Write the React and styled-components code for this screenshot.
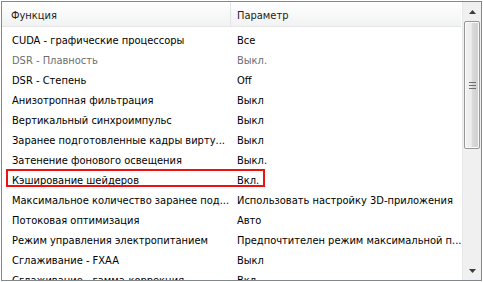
import React from "react";
import styled, { createGlobalStyle } from "styled-components";

const Global = createGlobalStyle`
  html, body { margin: 0; padding: 0; background: #ffffff; }
  body { font-family: "DejaVu Sans Condensed", "Liberation Sans", sans-serif; }
`;

const Frame = styled.div`
  margin: 1px;
  width: 481px;
  height: 280px;
  box-sizing: border-box;
  border: 1px solid #828790;
  display: flex;
  overflow: hidden;
  background: #fff;
`;

const Table = styled.div`
  flex: 1;
  display: flex;
  flex-direction: column;
  min-width: 0;
  overflow: hidden;
`;

const Header = styled.div`
  flex-shrink: 0;
  display: grid;
  grid-template-columns: 229px 1fr;
  height: 24px;
  background: linear-gradient(#ffffff, #f1f2f3);
  border-bottom: 1px solid #e5e5e5;
`;

const HeadCell = styled.div`
  display: flex;
  align-items: center;
  padding-left: ${(p) => p.$pad}px;
  padding-top: 3px;
  font-size: 11px;
  color: #222;
  border-right: ${(p) => (p.$divider ? "1px solid #e2e3e5" : "none")};
`;

const Body = styled.div`
  flex-shrink: 0;
  padding-top: 3px;
  display: flex;
  flex-direction: column;
`;

const Row = styled.div`
  position: relative;
  flex-shrink: 0;
  display: grid;
  grid-template-columns: 229px 1fr;
  height: 20px;
  align-items: center;
  font-size: 11px;
  color: ${(p) => (p.$dim ? "#6d6d6d" : "#000")};
`;

const Cell = styled.div`
  padding-left: ${(p) => p.$pad}px;
  white-space: nowrap;
  overflow: hidden;
`;

const Highlight = styled.div`
  position: absolute;
  left: 4px;
  top: -1px;
  width: 259px;
  height: 18px;
  box-sizing: border-box;
  border: 2px solid #ee1111;
  pointer-events: none;
`;

const Scrollbar = styled.div`
  flex-shrink: 0;
  width: 18px;
  margin-left: 1px;
  display: flex;
  flex-direction: column;
  background: #f0f0f0;
  border-left: 1px solid #e8e8e8;
`;

const Arrow = styled.div`
  height: 19px;
  flex-shrink: 0;
  display: flex;
  align-items: center;
  justify-content: center;
`;

const Track = styled.div`
  flex: 1;
  display: flex;
  flex-direction: column;
  padding: 0 1px;
`;

const Thumb = styled.div`
  height: 128px;
  flex-shrink: 0;
  box-sizing: border-box;
  border: 1px solid #979797;
  border-radius: 2px;
  background: linear-gradient(90deg, #f2f2f2 0%, #ececec 45%, #d8d8d8 55%, #d0d0d0 100%);
  box-shadow: inset 0 0 0 1px #fafafa;
  display: flex;
  align-items: center;
  justify-content: center;
`;

const rows = [
  ["CUDA - графические процессоры", "Все"],
  ["DSR - Плавность", "Выкл.", true],
  ["DSR - Степень", "Off"],
  ["Анизотропная фильтрация", "Выкл"],
  ["Вертикальный синхроимпульс", "Выкл"],
  ["Заранее подготовленные кадры вирту...", "Выкл"],
  ["Затенение фонового освещения", "Выкл."],
  ["Кэширование шейдеров", "Вкл.", false, true],
  ["Максимальное количество заранее под...", "Использовать настройку 3D-приложения"],
  ["Потоковая оптимизация", "Авто"],
  ["Режим управления электропитанием", "Предпочтителен режим максимальной п..."],
  ["Сглаживание - FXAA", "Выкл"],
  ["Сглаживание - гамма-коррекция", "Вкл"],
];

export default function App() {
  return (
    <>
      <Global />
      <Frame>
        <Table>
          <Header>
            <HeadCell $pad={9} $divider>Функция</HeadCell>
            <HeadCell $pad={6}>Параметр</HeadCell>
          </Header>
          <Body>
            {rows.map(([a, b, dim, hl]) => (
              <Row key={a} $dim={dim}>
                <Cell $pad={10}>{a}</Cell>
                <Cell $pad={6}>{b}</Cell>
                {hl && <Highlight />}
              </Row>
            ))}
          </Body>
        </Table>
        <Scrollbar>
          <Arrow>
            <svg width="7" height="4" viewBox="0 0 7 4">
              <path d="M3.5 0 L7 4 L0 4 Z" fill="#3c3c3c" />
            </svg>
          </Arrow>
          <Track>
            <Thumb>
              <svg width="7" height="7" viewBox="0 0 7 7">
                <rect x="0" y="0" width="7" height="1" fill="#6e6e6e" />
                <rect x="0" y="3" width="7" height="1" fill="#6e6e6e" />
                <rect x="0" y="6" width="7" height="1" fill="#6e6e6e" />
              </svg>
            </Thumb>
          </Track>
          <Arrow>
            <svg width="7" height="4" viewBox="0 0 7 4">
              <path d="M0 0 L7 0 L3.5 4 Z" fill="#3c3c3c" />
            </svg>
          </Arrow>
        </Scrollbar>
      </Frame>
    </>
  );
}
